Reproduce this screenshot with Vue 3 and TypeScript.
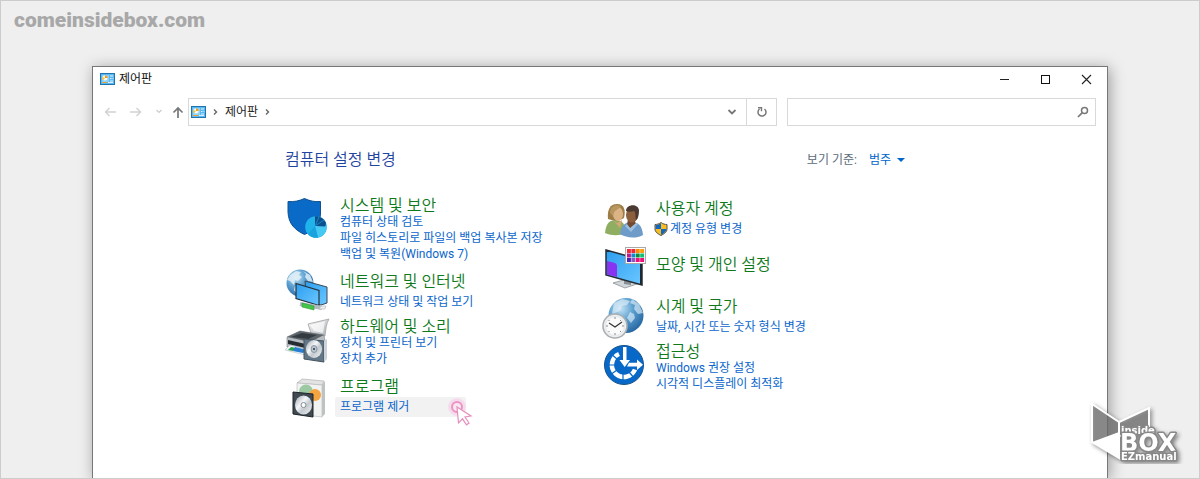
<script setup lang="ts">
import { ref } from 'vue'

interface Category {
  id: string
  title: string
  links: string[]
  shield?: boolean
}

const query = ref('')

const columns: Category[][] = [
  [
    { id: 'security', title: '시스템 및 보안', links: ['컴퓨터 상태 검토', '파일 히스토리로 파일의 백업 복사본 저장', '백업 및 복원(Windows 7)'] },
    { id: 'network', title: '네트워크 및 인터넷', links: ['네트워크 상태 및 작업 보기'] },
    { id: 'hardware', title: '하드웨어 및 소리', links: ['장치 및 프린터 보기', '장치 추가'] },
    { id: 'programs', title: '프로그램', links: ['프로그램 제거'] },
  ],
  [
    { id: 'users', title: '사용자 계정', links: ['계정 유형 변경'], shield: true },
    { id: 'display', title: '모양 및 개인 설정', links: [] },
    { id: 'clock', title: '시계 및 국가', links: ['날짜, 시간 또는 숫자 형식 변경'] },
    { id: 'access', title: '접근성', links: ['Windows 권장 설정', '시각적 디스플레이 최적화'] },
  ],
]

const swatches: string[] = [
  '#f0283c', '#f0283c', '#ff8c00', '#ff9c10',
  '#c01890', '#0b8ccc', '#128a3c', '#10c070',
  '#4b1fb0', '#8a5ac0', '#f0107c', '#f0107c',
]
</script>

<template>
  <div class="page">
    <div class="brand">comeinsidebox.com</div>

    <svg width="0" height="0" class="defs" aria-hidden="true">
      <defs>
        <symbol id="panel" viewBox="0 0 15 12">
          <rect x=".5" y=".5" width="14" height="11" fill="#5cb8f0" stroke="#1f74b0" />
          <rect x="2" y="2" width="7" height="7" fill="#8ed2f8" />
          <circle cx="5" cy="5" r="2.5" fill="#f5fbff" />
          <path d="M5 5V2.2A2.8 2.8 0 0 1 7.7 5Z" fill="#f39a1c" />
          <path d="M5 5L3 7.4A3 3 0 0 1 2.3 4Z" fill="#f7c23c" />
          <path d="M10 3h3M10 5.5h1.5M12.5 5.5h.8M10 8h3" stroke="#d8f0ff" />
          <path d="M2 9.5h5" stroke="#f0a030" />
          <path d="M8 9.5h5" stroke="#d8f0ff" />
        </symbol>
        <radialGradient id="globeFill" cx=".35" cy=".3" r=".8">
          <stop offset="0" stop-color="#c4e2f4" />
          <stop offset=".45" stop-color="#5b9fd0" />
          <stop offset="1" stop-color="#1f5f9c" />
        </radialGradient>
        <linearGradient id="screen" x1="0" y1="0" x2="1" y2="1">
          <stop offset="0" stop-color="#2b9df0" />
          <stop offset="1" stop-color="#6cc8ff" />
        </linearGradient>
        <linearGradient id="metal" x1="0" y1="0" x2="1" y2="1">
          <stop offset="0" stop-color="#fafafa" />
          <stop offset="1" stop-color="#a9aeb2" />
        </linearGradient>
        <linearGradient id="disc" x1="0" y1="0" x2="1" y2="1">
          <stop offset="0" stop-color="#9ba3aa" />
          <stop offset=".4" stop-color="#f6f8fa" />
          <stop offset=".6" stop-color="#c2c9cf" />
          <stop offset="1" stop-color="#f4f4f4" />
        </linearGradient>
      </defs>
    </svg>

    <main class="window">
      <header class="titlebar">
        <svg class="panel-icon" aria-hidden="true"><use href="#panel" /></svg>
        <span class="caption">제어판</span>
        <div class="controls">
          <button type="button" aria-label="최소화"><svg width="11" height="11"><path d="M1 5.5h9" stroke="#222" /></svg></button>
          <button type="button" aria-label="최대화"><svg width="11" height="11"><rect x="1.5" y="1.5" width="8" height="8" fill="none" stroke="#111" /></svg></button>
          <button type="button" aria-label="닫기"><svg width="11" height="11"><path d="M1 1l9 9M10 1l-9 9" stroke="#222" stroke-width="1.1" /></svg></button>
        </div>
      </header>

      <nav class="toolbar">
        <div class="history">
          <button type="button" aria-label="뒤로"><svg width="12" height="12"><path d="M12 6H1.5M5.5 2l-4 4 4 4" fill="none" stroke="#d2d2d2" stroke-width="1.4" /></svg></button>
          <button type="button" aria-label="앞으로"><svg width="12" height="12"><path d="M0 6h10.5M6.5 2l4 4-4 4" fill="none" stroke="#d2d2d2" stroke-width="1.4" /></svg></button>
          <button type="button" aria-label="최근 위치" class="recent"><svg width="6" height="12"><path d="M.5 4L3 6.5 5.5 4" fill="none" stroke="#ccc" stroke-width="1.2" /></svg></button>
          <button type="button" aria-label="위로"><svg width="12" height="12"><path d="M6 12V2M1.5 6.5L6 2l4.500 4.500" fill="none" stroke="#777" stroke-width="1.7" /></svg></button>
        </div>
        <div class="address">
          <svg class="panel-icon" aria-hidden="true"><use href="#panel" /></svg>
          <svg class="crumb" width="5" height="8"><path d="M1 1.5L3.5 4 1 6.5" fill="none" stroke="#666" stroke-width="1.4" /></svg>
          <a href="#">제어판</a>
          <svg class="crumb" width="5" height="8"><path d="M1 1.5L3.5 4 1 6.5" fill="none" stroke="#666" stroke-width="1.4" /></svg>
          <button type="button" class="expand" aria-label="이전 위치"><svg width="10" height="8"><path d="M1.5 2L5 5.500 8.500 2" fill="none" stroke="#777" stroke-width="1.8" /></svg></button>
          <button type="button" class="refresh" aria-label="새로 고침">
            <svg width="12" height="12"><path d="M8.5 3A4 4 0 1 1 3.500 3" fill="none" stroke="#777" stroke-width="1.5" /><path d="M2 1.700H5.500V5.200" fill="none" stroke="#777" stroke-width="1.4" /></svg>
          </button>
        </div>
        <label class="search">
          <input v-model="query" type="text" aria-label="제어판 검색">
          <svg width="12" height="12" aria-hidden="true"><circle cx="7.5" cy="4.5" r="3" fill="none" stroke="#777" stroke-width="1.5" /><path d="M5.300 6.700L1 11" stroke="#777" stroke-width="1.7" /></svg>
        </label>
      </nav>

      <section class="content">
        <div class="heading">
          <h1>컴퓨터 설정 변경</h1>
          <div class="view">
            <span>보기 기준:</span>
            <button type="button">범주 <svg width="8" height="4" aria-hidden="true"><path d="M0 0h8L4 4z" fill="#0066cc" /></svg></button>
          </div>
        </div>

        <div class="columns">
          <div v-for="(column, i) in columns" :key="i" class="column">
            <article v-for="item in column" :key="item.id" class="category" :class="item.id">
              <svg v-if="item.id === 'security'" class="icon" viewBox="0 0 46 46" aria-hidden="true">
                <path d="M3 6.500C9 7 14 6 19.500 3.500 25 6 29 7 35.500 6.500V19C35 31 27 36 19.500 39.500 10 35 3.500 29 3 17Z" fill="#0a6ac8" stroke="#12518e" />
                <circle cx="31" cy="32" r="10.800" fill="#20b2ea" />
                <path d="M30 31L30 21.200C34 21 39 23 41 28L40 33Z" fill="#0b4f8e" />
                <path d="M30 31L34 22M30 31L39 25" stroke="#1d86c4" />
                <path d="M30 31L40 31.500 41.700 30A10.800 10.800 0 0 1 33 42.500Z" fill="#46c8f4" />
                <path d="M30 31L33 42.500A11 11 0 0 1 23 39Z" fill="#1aa2dc" />
              </svg>

              <svg v-else-if="item.id === 'network'" class="icon" viewBox="0 0 46 46" aria-hidden="true">
                <circle cx="15" cy="16" r="13.500" fill="url(#globeFill)" />
                <path d="M5 8l6-4 5 1-2 3 3 2-4 4-3-1-1 5-4-4-3-1zM18 4l7 4 3 7-5-1-3-4 1-3zM10 19l6 2 1 4-4 4-4-6z" fill="#e3f1f8" opacity=".85" />
                <path d="M20 14l22 6v16l-6 2-14-4z" fill="url(#screen)" stroke="#3b4a55" />
                <path d="M11 16.500l23 7v15l-23-7z" fill="url(#screen)" stroke="#26323b" stroke-width="1.200" />
                <path d="M15 37l22 4" stroke="#b4bac0" stroke-width="4" />
                <path d="M17 36l12 3v4l-12-3z" fill="#45c64a" stroke="#2b9936" stroke-width=".6" />
                <path d="M36 39h5l-1 3h-6z" fill="#eceeef" stroke="#a5a9ac" stroke-width=".5" />
              </svg>

              <svg v-else-if="item.id === 'hardware'" class="icon" viewBox="0 0 46 46" aria-hidden="true">
                <path d="M23 7L44 2c-3 5-3 10-4 17L26 16z" fill="url(#metal)" stroke="#999" stroke-width=".7" />
                <path d="M25 8l15-4-2 12-9-2z" fill="#fff" opacity=".7" />
                <path d="M2 20L15 14l24 4 2 13-17 6L2 30z" fill="#b8bdc1" stroke="#7a8084" stroke-width=".6" />
                <path d="M2 20L15 14l24 4-14 7z" fill="#5e666c" />
                <path d="M6 20l11-4 15 2-9 4z" fill="#343c42" />
                <path d="M3 23l22 5v4L3 27z" fill="#262d32" />
                <path d="M5 28l19 5-4 5-20-5z" fill="#eef3f5" stroke="#aeb5ba" stroke-width=".5" />
                <path d="M6 30l5 1-3 3-5-1z" fill="#2aa352" /><path d="M10 30l12 3-4 3-10-2z" fill="#287ed0" />
                <path d="M19 22l20 2v21l-20-3z" fill="#627889" stroke="#47535d" />
                <path d="M39 24l3-2v20l-3 3z" fill="#cbd3d9" />
                <ellipse cx="29" cy="32" rx="8" ry="9" fill="url(#disc)" />
                <ellipse cx="29" cy="32" rx="3" ry="3.500" fill="#b8c5ce" stroke="#8c99a2" />
                <circle cx="29" cy="32" r="1" fill="#334" />
              </svg>

              <svg v-else-if="item.id === 'programs'" class="icon" viewBox="0 0 46 46" aria-hidden="true">
                <path d="M12 8L17 4l22 2-2 4z" fill="#e3e3e3" stroke="#aaa" stroke-width=".6" />
                <path d="M12 8l25 2v32l-25-3z" fill="#f1f2f2" stroke="#b5b5b5" stroke-width=".6" />
                <path d="M37 10l3-4v33l-3 3z" fill="#bfc1c3" />
                <path d="M14 17a7 7 0 0 1 14-1v9H14z" fill="#9cc9a2" />
                <circle cx="30" cy="20" r="6" fill="#f5a442" />
                <path d="M8 17l20 2v23L8 39z" fill="#414a52" stroke="#1c2329" />
                <ellipse cx="18.500" cy="30" rx="8.500" ry="9.500" fill="url(#disc)" />
                <circle cx="18.500" cy="30" r="2.500" fill="#fff" stroke="#858d92" />
              </svg>

              <svg v-else-if="item.id === 'users'" class="icon" viewBox="0 0 46 46" aria-hidden="true">
                <path d="M4 35c1-10 5-13 10-13 7 0 11 4 11 13-7 3-14 3-21 0z" fill="#8fae62" />
                <path d="M7 21C6 12 9 6 16 6c7 0 9 6 7 14-4 3-11 3-16 1z" fill="#9c7d48" />
                <ellipse cx="17" cy="16" rx="5" ry="7" fill="#dcb384" />
                <path d="M9 15c0-7 5-9 11-7-2 4-7 3-8 10z" fill="#b7975e" />
                <path d="M12 22l4 3 5-3-2 8z" fill="#d5a678" />
                <path d="M19 36c1-8 5-12 11-12 7 0 11 3 12 13-7 4-17 3-23-1z" fill="#6f9bc9" />
                <path d="M27 21l7 2 1 4-5 4-4-4z" fill="#74492f" />
                <ellipse cx="31" cy="17" rx="6" ry="7.500" fill="#8b5e3c" />
                <path d="M25 13c0-7 12-8 13-1 0 5-1 9-3 10-1-4 0-7-2-9-3 1-5 1-8 0z" fill="#4b3a31" />
                <path d="M26 26l3 4 6-5 2 1-7 8-6-6z" fill="#9bc0e2" />
              </svg>

              <svg v-else-if="item.id === 'display'" class="icon" viewBox="0 0 46 46" aria-hidden="true">
                <path d="M12 38l14-4 13 4-15 5z" fill="#d2d6d9" stroke="#7f878c" stroke-width=".7" />
                <path d="M23 33l7 2v5l-7-1z" fill="#868e94" />
                <path d="M5 5l36 10v25L5 30z" fill="url(#screen)" stroke="#252d34" stroke-width="1.500" />
                <path d="M6 16l8 2q2 1 2 3v11L6 29.500z" fill="#8735f0" />
                <path d="M39 15l2 0v25l-2-.6z" fill="#1d2830" />
                <rect x="24.500" y="2.500" width="20" height="16" fill="#fff" stroke="#a9a9a9" />
                <rect v-for="(c, n) in swatches" :key="n" :x="26 + (n % 4) * 4.4" :y="4 + Math.floor(n / 4) * 4.5" width="3.900" height="4" :fill="c" />
              </svg>

              <svg v-else-if="item.id === 'clock'" class="icon" viewBox="0 0 46 46" aria-hidden="true">
                <circle cx="25" cy="20.500" r="17.500" fill="url(#globeFill)" />
                <path d="M13 8l8-4 8 2-3 4-5 1-2 5-8 3zM31 4l7 5 4 9-5 1-4-5 1-4-5-2zM29 17l4 2 1 4-4 5-4-5z" fill="#dfeef7" opacity=".65" />
                <circle cx="14" cy="31" r="12" fill="#eef0f1" stroke="#aaafb3" stroke-width="1.600" />
                <circle cx="14" cy="31" r="9.500" fill="#fafafa" stroke="#d8dcdf" stroke-width=".6" />
                <path d="M14 22v2M14 38v2M5 31h2M21 31h2M7.500 25l1 1M20 25l-1 1M7.500 37l1-1M20 37l-1-1" stroke="#85898c" />
                <path d="M8 28l6 4 7-5" fill="none" stroke="#333" stroke-width="1.200" />
              </svg>

              <svg v-else class="icon" viewBox="0 0 46 46" aria-hidden="true">
                <circle cx="23" cy="23" r="19.500" fill="#0768c7" stroke="#17548e" />
                <path d="M18 12A12 12 0 1 0 34 27.500" fill="none" stroke="#fff" stroke-width="4.500" />
                <path d="M16 17L9 11M14 23H7M16 28L9 33M22 31V39M28 30L34 37" stroke="#0768c7" stroke-width="1.200" />
                <path d="M22 5h3.500V18H29L23.700 25 18.500 18H22z" fill="#fff" />
                <path d="M28 20.700h8V17.500l6 5.200-6 5.200V24.500H26z" fill="#fff" />
              </svg>

              <div class="text">
                <h2><a href="#">{{ item.title }}</a></h2>
                <ul v-if="item.links.length">
                  <li v-for="link in item.links" :key="link">
                    <svg v-if="item.shield" class="shield" width="14" height="14" viewBox="0 0 14 14" aria-hidden="true">
                      <path d="M7 .5C5 2 3 2.500 1 2.500V7c0 3 3 5 6 6.500C10 12 13 10 13 7V2.500C11 2.500 9 2 7 .5z" fill="#f8bd22" stroke="#555" />
                      <path d="M7 1.200C5 2.500 3 3 1.600 3v4H7zM7 7h5.400C12.400 9.500 10 11.500 7 12.800z" fill="#1467bd" />
                    </svg>
                    <a href="#">{{ link }}</a>
                    <svg v-if="item.id === 'programs'" class="pointer" width="28" height="30" viewBox="0 0 28 30" aria-hidden="true">
                      <circle cx="10" cy="10" r="9" fill="#f5dcec" />
                      <circle cx="10" cy="10" r="5" fill="#f8e6f1" stroke="#ee92c4" stroke-width="2" />
                      <path d="M10 10l14 9-6 1 4 6-2.500 1.800-4-6-4 4z" fill="#fff" stroke="#e590bd" stroke-width="1.200" />
                    </svg>
                  </li>
                </ul>
              </div>
            </article>
          </div>
        </div>
      </section>
    </main>

    <svg class="logo" width="104" height="66" viewBox="0 0 104 66" role="img" aria-label="inside BOX EZmanual">
      <g class="logo-shape">
        <path d="M4 6l27 18v36L4 44z" fill="#777" fill-opacity=".7" stroke="#fff" stroke-width="2" />
        <path d="M31 24l30-14v22l-30 6z" fill="#777" fill-opacity=".7" stroke="#fff" stroke-width="2" />
        <path d="M4 44l27-10v26z" fill="#fff" />
        <g class="logo-text">
          <text x="33" y="36" font-size="10">inside</text>
          <text x="32" y="53" font-size="24">BOX</text>
          <text x="33" y="62" font-size="10">EZmanual</text>
        </g>
      </g>
    </svg>
  </div>
</template>

<style>
body {
  margin: 0;
}
</style>

<style scoped>
.page {
  position: relative;
  box-sizing: border-box;
  min-height: 100vh;
  display: flex;
  flex-direction: column;
  overflow: hidden;
  padding: 0 91px;
  border: 1px solid #ccc;
  background: #efefef;
  color: #222;
  font: 12px/16px Roboto, "Noto Sans CJK KR", sans-serif;
}
.defs {
  position: absolute;
}
.brand {
  height: 65px;
  box-sizing: border-box;
  padding-top: 6px;
  margin-left: -78px;
  color: #a8a8a8;
  font: 900 21px/26px Impact, Roboto, sans-serif;
}
.window {
  flex: 1;
  display: flex;
  flex-direction: column;
  border: 1px solid #777;
  border-bottom: 0;
  background: #fff;
  box-shadow: 2px 2px 14px rgba(0, 0, 0, 0.35);
}
button {
  display: flex;
  align-items: center;
  justify-content: center;
  padding: 0;
  border: 0;
  background: none;
  font: inherit;
  color: inherit;
}
a {
  color: inherit;
  text-decoration: none;
}
h1,
h2,
ul {
  margin: 0;
  padding: 0;
  list-style: none;
}
.panel-icon {
  width: 15px;
  height: 12px;
  flex: none;
}
.titlebar {
  display: flex;
  align-items: center;
  height: 24px;
  padding-left: 7px;
  gap: 4px;
}
.caption {
  color: #111;
}
.controls {
  display: flex;
  margin-left: auto;
}
.controls button {
  width: 41px;
  height: 24px;
}
.toolbar {
  display: grid;
  grid-template-columns: 95px 589fr 319fr;
  align-items: center;
  margin-top: 7px;
  padding-right: 11px;
}
.history {
  display: flex;
  padding-left: 11px;
  gap: 14px;
}
.history .recent {
  margin-right: -4px;
}
.address,
.search {
  display: flex;
  align-items: center;
  box-sizing: border-box;
  height: 28px;
  border: 1px solid #d9d9d9;
}
.address {
  padding-left: 2px;
}
.crumb {
  margin: 0 7px;
}
.address button {
  height: 26px;
}
.address .expand {
  width: 28px;
  margin-left: auto;
}
.address .refresh {
  width: 30px;
  border-left: 1px solid #d9d9d9;
}
.search {
  margin-left: 10px;
  padding-right: 6px;
}
.search input {
  flex: 1;
  min-width: 0;
  height: 24px;
  padding: 0 6px;
  border: 0;
  outline: 0;
  background: none;
  font: inherit;
}
.content {
  max-width: 620px;
  padding: 24px 0 24px 192px;
}
.heading {
  display: flex;
  align-items: center;
  justify-content: space-between;
  height: 20px;
}
h1 {
  color: #1f45a0;
  font-size: 16px;
  font-weight: 350;
  line-height: 20px;
}
.view {
  display: flex;
  gap: 12px;
  color: #5a6b7b;
}
.view button {
  gap: 6px;
  color: #0066cc;
}
.columns {
  display: grid;
  grid-template-columns: 316px 1fr;
  margin-top: 25px;
}
.column + .column {
  padding-top: 3px;
}
.category {
  display: flex;
  gap: 9px;
}
.icon {
  width: 46px;
  height: 46px;
  flex: none;
}
h2 {
  color: #0f7a1c;
  font-size: 16px;
  font-weight: 350;
  line-height: 16px;
}
li {
  display: flex;
  align-items: center;
  color: #0a66cc;
  white-space: nowrap;
}
.text {
  padding-top: 3px;
}
.security {
  height: 72px;
}
.network,
.display {
  height: 50px;
}
.hardware {
  height: 58px;
}
.users,
.clock {
  height: 47px;
}
.network .text {
  padding-top: 7px;
}
.display .text {
  padding-top: 12px;
}
.clock .text,
.programs .text {
  padding-top: 4px;
}
.hardware .text,
.access .text {
  padding-top: 2px;
}
.network ul,
.users ul,
.clock ul {
  margin-top: 4px;
}
.programs li {
  position: relative;
  width: 126px;
  height: 20px;
  margin: 2px 0 0 -5px;
  padding-left: 5px;
  border-radius: 2px;
  background: #f2f2f2;
}
.pointer {
  position: absolute;
  right: -9px;
  top: 0;
}
.shield {
  margin: 0 2px 0 -2px;
}
.logo {
  position: absolute;
  right: 7px;
  bottom: 14px;
}
.logo-shape {
  filter: drop-shadow(2px 2px 2px rgba(0, 0, 0, 0.45));
}
.logo-text {
  fill: #fff;
  stroke: #888;
  stroke-width: 3px;
  stroke-linejoin: round;
  paint-order: stroke;
  font-family: "DejaVu Sans", sans-serif;
  font-weight: 700;
}
</style>
